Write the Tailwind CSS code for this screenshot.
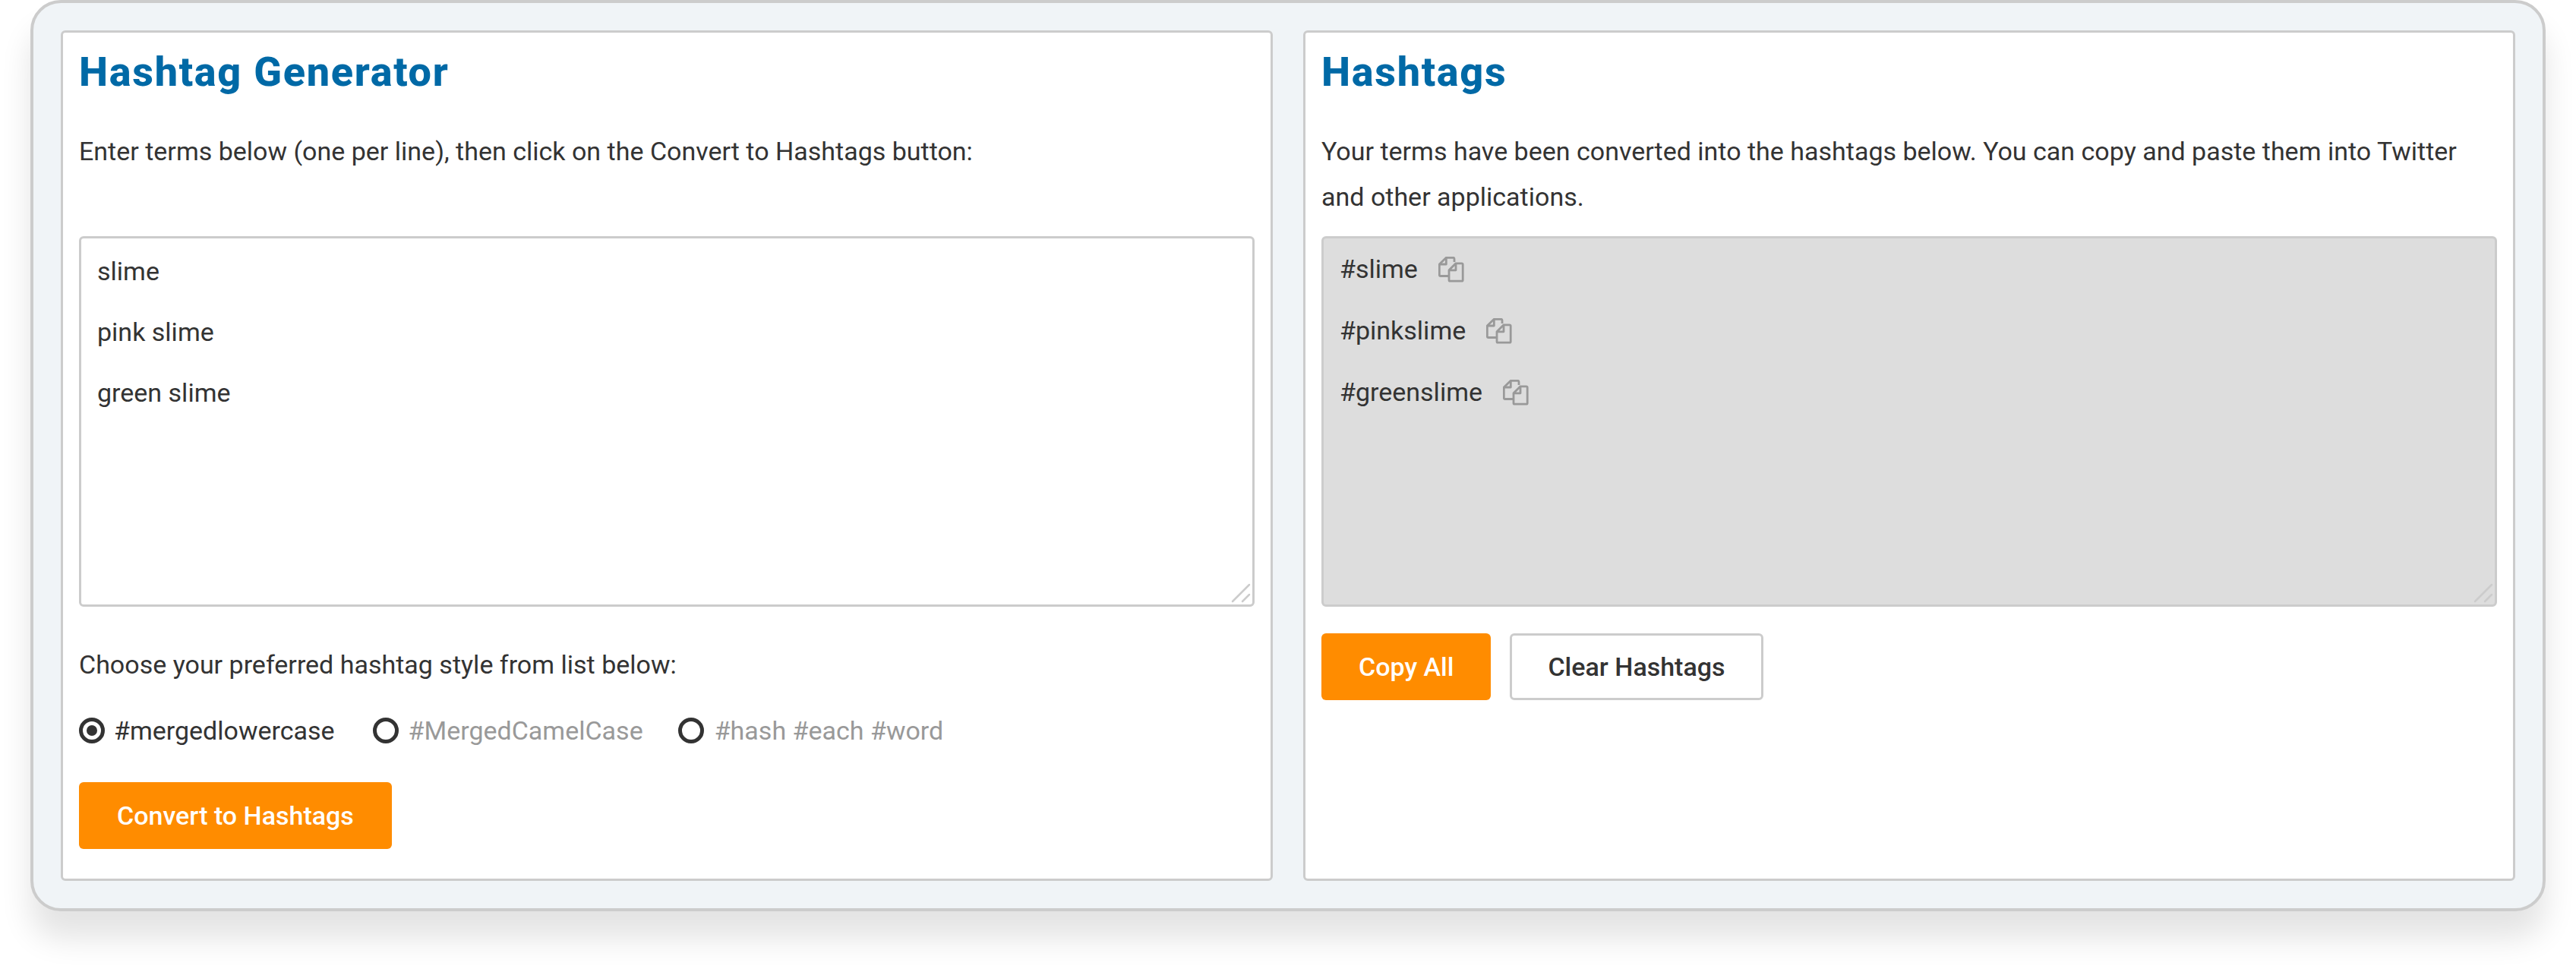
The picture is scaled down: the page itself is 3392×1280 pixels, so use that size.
<!DOCTYPE html>
<html lang="en">
<head>
  <meta charset="UTF-8" />
  <title>Hashtag Generator</title>
  <script src="https://cdn.jsdelivr.net/npm/@tailwindcss/browser@4"></script>
</head>
<body class="bg-white h-[1280px] overflow-hidden font-[Roboto,sans-serif] text-[34px] text-[#333]">
  <div class="ml-[40px] w-[3312px] h-[1200px] bg-[#f0f4f7] border-[4px] border-[#ccc] rounded-[40px] p-[36px] grid grid-cols-2 gap-[40px] shadow-[0_36px_40px_rgba(0,0,0,0.11)]">

    <!-- Generator -->
    <section class="bg-white border-[3px] border-[#ccc] rounded-[6px] px-[21px] flex flex-col">
      <h1 class="h-[62px] mt-[21px] font-extrabold text-[54px] tracking-[1.7px] leading-[62px] text-[#0069a6]">Hashtag Generator</h1>
      <p class="mt-[43px] h-[120px] leading-[60px]">Enter terms below (one per line), then click on the Convert to Hashtags button:</p>
      <div class="relative mt-[22px] h-[488px]">
        <textarea class="block w-full h-full resize-none bg-white border-[3px] border-[#ccc] rounded-[6px] px-[21px] py-[3px] leading-[80px] outline-none">slime
pink slime
green slime</textarea>
        <svg class="absolute right-[5px] bottom-[5px] w-[26px] h-[26px]" viewBox="0 0 26 26" fill="none" stroke="#ccc" stroke-width="2.5" stroke-linecap="round"><path d="M2 24 24 2M15 24l9-9" /></svg>
      </div>
      <p class="mt-[46px] leading-[60px]">Choose your preferred hashtag style from list below:</p>
      <div class="mt-[27px] flex items-center h-[60px]">
        <label class="flex items-center gap-[12px]">
          <input type="radio" name="style" checked class="appearance-none w-[34px] h-[34px] rounded-full border-[5px] border-[#333] p-[5px] bg-clip-content checked:bg-[#333]" />
          <span>#mergedlowercase</span>
        </label>
        <label class="flex items-center gap-[13px] ml-[50px] text-[#999]">
          <input type="radio" name="style" class="appearance-none w-[34px] h-[34px] rounded-full border-[5px] border-[#333] p-[5px] bg-clip-content checked:bg-[#333]" />
          <span>#MergedCamelCase</span>
        </label>
        <label class="flex items-center gap-[14px] ml-[46px] text-[#999]">
          <input type="radio" name="style" class="appearance-none w-[34px] h-[34px] rounded-full border-[5px] border-[#333] p-[5px] bg-clip-content checked:bg-[#333]" />
          <span>#hash #each #word</span>
        </label>
      </div>
      <div class="mt-[38px]">
        <button class="h-[88px] px-[50px] bg-[#ff8c00] text-white font-medium rounded-[6px]">Convert to Hashtags</button>
      </div>
    </section>

    <!-- Result -->
    <section class="bg-white border-[3px] border-[#ccc] rounded-[6px] px-[21px] flex flex-col">
      <h2 class="h-[62px] mt-[21px] font-extrabold text-[54px] tracking-[1.7px] leading-[62px] text-[#0069a6]">Hashtags</h2>
      <p class="mt-[43px] h-[120px] leading-[60px]">Your terms have been converted into the hashtags below. You can copy and paste them into Twitter and other applications.</p>
      <div class="relative mt-[22px] h-[488px] bg-[#ddd] border-[3px] border-[#ccc] rounded-[6px] px-[21px] py-0">
        <ul class="leading-[81px]">
          <li class="flex items-center gap-[27px]">#slime
            <svg class="w-[34px] h-[34px]" viewBox="0 0 34 34" fill="none" stroke="#999" stroke-width="2.8" stroke-linejoin="round"><path d="M21 7V2.8a1.5 1.5 0 0 0-1.5-1.5H10.3L1.3 10v14a1.5 1.5 0 0 0 1.5 1.5H13" /><path d="M10.3 1.3V10H1.3" /><path d="M23 8.8h7.7a1.5 1.5 0 0 1 1.5 1.5v20.4a1.5 1.5 0 0 1-1.5 1.5H15.5a1.5 1.5 0 0 1-1.5-1.5V17.8ZM23 8.8v9h-9" /></svg>
          </li>
          <li class="flex items-center gap-[27px]">#pinkslime
            <svg class="w-[34px] h-[34px]" viewBox="0 0 34 34" fill="none" stroke="#999" stroke-width="2.8" stroke-linejoin="round"><path d="M21 7V2.8a1.5 1.5 0 0 0-1.5-1.5H10.3L1.3 10v14a1.5 1.5 0 0 0 1.5 1.5H13" /><path d="M10.3 1.3V10H1.3" /><path d="M23 8.8h7.7a1.5 1.5 0 0 1 1.5 1.5v20.4a1.5 1.5 0 0 1-1.5 1.5H15.5a1.5 1.5 0 0 1-1.5-1.5V17.8ZM23 8.8v9h-9" /></svg>
          </li>
          <li class="flex items-center gap-[27px]">#greenslime
            <svg class="w-[34px] h-[34px]" viewBox="0 0 34 34" fill="none" stroke="#999" stroke-width="2.8" stroke-linejoin="round"><path d="M21 7V2.8a1.5 1.5 0 0 0-1.5-1.5H10.3L1.3 10v14a1.5 1.5 0 0 0 1.5 1.5H13" /><path d="M10.3 1.3V10H1.3" /><path d="M23 8.8h7.7a1.5 1.5 0 0 1 1.5 1.5v20.4a1.5 1.5 0 0 1-1.5 1.5H15.5a1.5 1.5 0 0 1-1.5-1.5V17.8ZM23 8.8v9h-9" /></svg>
          </li>
        </ul>
        <svg class="absolute right-[2px] bottom-[2px] w-[26px] h-[26px]" viewBox="0 0 26 26" fill="none" stroke="#ccc" stroke-width="2.5" stroke-linecap="round"><path d="M2 24 24 2M15 24l9-9" /></svg>
      </div>
      <div class="mt-[35px] flex gap-[25px]">
        <button class="h-[88px] px-[49px] bg-[#ff8c00] text-white font-medium rounded-[6px]">Copy All</button>
        <button class="h-[88px] px-[47px] bg-white border-[3px] border-[#ccc] font-medium rounded-[6px]">Clear Hashtags</button>
      </div>
    </section>
  </div>
</body>
</html>
